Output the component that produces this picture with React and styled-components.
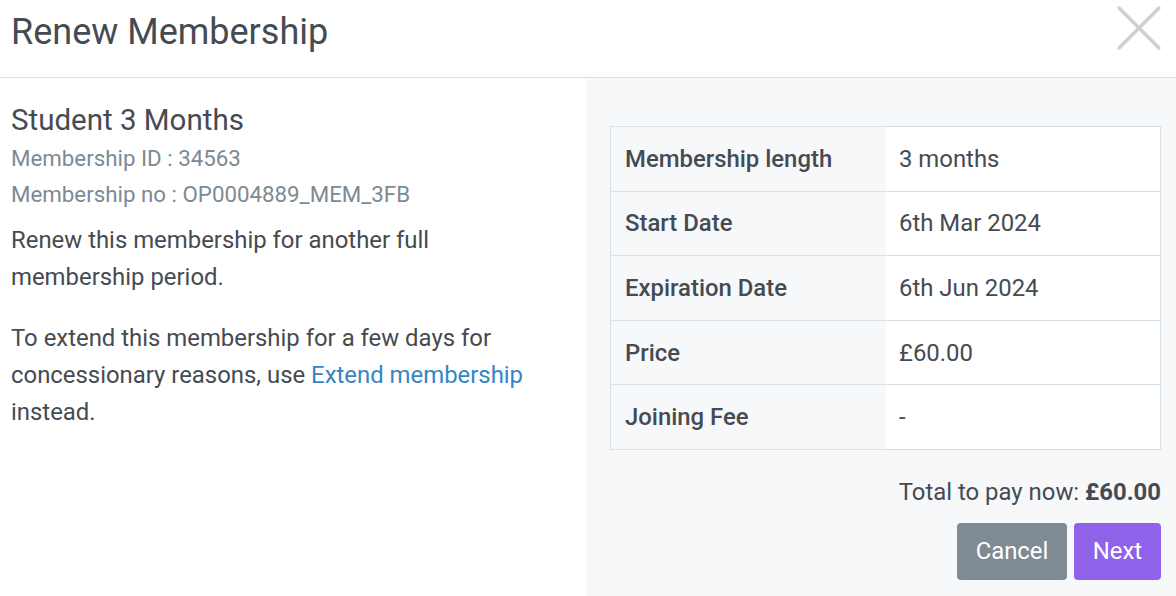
import React from 'react';
import styled, { createGlobalStyle } from 'styled-components';

const GlobalStyle = createGlobalStyle`
    html, body {
        margin: 0;
        padding: 0;
        background: #fff;
        font-family: Roboto, "Liberation Sans", sans-serif;
        color: #454b52;
    }
`;

const Modal = styled.div`
    width: 1176px;
    height: 596px;
    display: flex;
    flex-direction: column;
    overflow: hidden;
`;

const Header = styled.div`
    height: 77px;
    display: flex;
    align-items: center;
    justify-content: space-between;
    padding: 0 14px 0 11px;
    border-bottom: 1px solid #dcdfe3;
    flex-shrink: 0;
`;

const Title = styled.h1`
    margin: 0 0 13px;
    font-size: 36px;
    font-weight: 400;
    color: #454b52;
`;

const CloseButton = styled.button`
    border: none;
    background: none;
    padding: 0;
    margin-bottom: 22px;
    cursor: pointer;
    display: flex;
`;

const Body = styled.div`
    flex: 1;
    display: flex;
`;

const Left = styled.div`
    width: 586px;
    padding: 22px 11px;
    box-sizing: border-box;
`;

const Right = styled.div`
    flex: 1;
    background: #f7f8fa;
    padding: 48px 15px 0 24px;
    display: flex;
    flex-direction: column;
    align-items: flex-end;
`;

const Name = styled.h2`
    margin: 0;
    font-size: 29.5px;
    font-weight: 400;
    line-height: 40px;
`;

const Meta = styled.div`
    font-size: 22.3px;
    line-height: 36px;
    color: #7c8a95;
`;

const Para = styled.p`
    margin: ${p => p.first ? '10px' : '24px'} 0 0;
    font-size: 23.9px;
    line-height: 37px;
    color: #454b52;
`;

const Link = styled.a`
    color: #3585c4;
    text-decoration: none;
    cursor: pointer;
`;

const Table = styled.table`
    width: 100%;
    border-collapse: collapse;
    border: 1px solid #d8dfe6;
    font-size: 23.9px;
`;

const Row = styled.tr`
    height: 64.6px;
    border-bottom: 1px solid #d8dfe6;
`;

const Label = styled.td`
    width: 261px;
    padding: 0 0 0 14px;
    font-weight: 500;
    background: #f7f8fa;
`;

const Value = styled.td`
    padding: 0 0 0 13px;
    background: #fff;
`;

const Total = styled.div`
    margin-top: 29px;
    font-size: 23.9px;
    line-height: 26px;
    b { font-weight: 700; }
`;

const Actions = styled.div`
    display: flex;
    gap: 7px;
    margin-top: 18px;
`;

const Button = styled.button`
    height: 57px;
    width: ${p => p.primary ? '87px' : '110px'};
    padding: 0;
    border: none;
    border-radius: 4px;
    font-family: inherit;
    font-size: 23.9px;
    color: #fff;
    background: ${p => p.primary ? '#9062ea' : '#7e8a94'};
    cursor: pointer;
`;

const rows = [
    ['Membership length', '3 months'],
    ['Start Date', '6th Mar 2024'],
    ['Expiration Date', '6th Jun 2024'],
    ['Price', '£60.00'],
    ['Joining Fee', '-'],
];

export default function App() {
    return (
        <Modal>
            <GlobalStyle />
            <Header>
                <Title>Renew Membership</Title>
                <CloseButton aria-label="Close">
                    <svg width="46" height="46" viewBox="0 0 46 46">
                        <path d="M3 3 L43 43 M43 3 L3 43" stroke="#d0d0d0" strokeWidth="3.5" strokeLinecap="round" />
                    </svg>
                </CloseButton>
            </Header>
            <Body>
                <Left>
                    <Name>Student 3 Months</Name>
                    <Meta>Membership ID : 34563</Meta>
                    <Meta>Membership no : OP0004889_MEM_3FB</Meta>
                    <Para first>Renew this membership for another full<br />membership period.</Para>
                    <Para>
                        To extend this membership for a few days for<br />
                        concessionary reasons, use <Link>Extend membership</Link><br />
                        instead.
                    </Para>
                </Left>
                <Right>
                    <Table>
                        <tbody>
                            {rows.map(([k, v]) => (
                                <Row key={k}>
                                    <Label>{k}</Label>
                                    <Value>{v}</Value>
                                </Row>
                            ))}
                        </tbody>
                    </Table>
                    <Total>Total to pay now: <b>£60.00</b></Total>
                    <Actions>
                        <Button>Cancel</Button>
                        <Button primary>Next</Button>
                    </Actions>
                </Right>
            </Body>
        </Modal>
    );
}
